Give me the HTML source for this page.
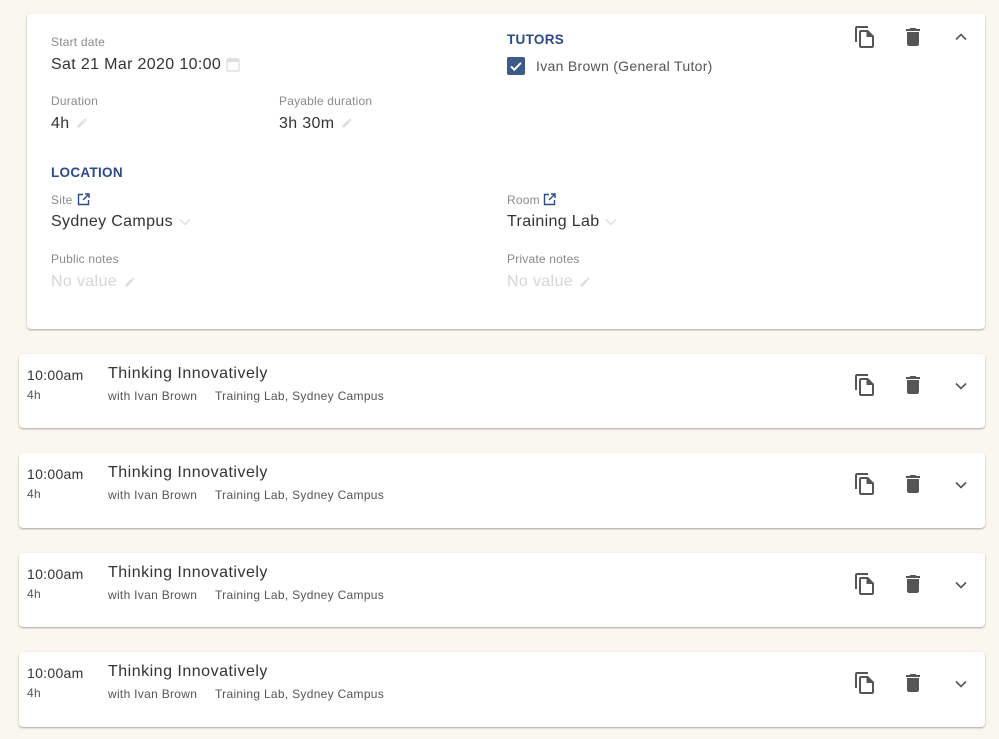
<!DOCTYPE html>
<html><head><meta charset="utf-8"><style>
*{margin:0;padding:0;box-sizing:border-box}
body{width:999px;height:739px;background:#faf7ef;font-family:"Liberation Sans",sans-serif;position:relative;overflow:hidden;color:#2a2a2a}
.card{position:absolute;background:#fff;border-radius:4px;box-shadow:0 1px 2px rgba(0,0,0,.25),0 1px 1px rgba(0,0,0,.1)}
.a{position:absolute;white-space:nowrap}
.lbl{font-size:12px;color:#8a8a8a;letter-spacing:.2px}
.val{font-size:16px;color:#333;letter-spacing:.35px}
.h{font-size:13.5px;font-weight:bold;color:#2c4a8a;letter-spacing:.3px}
.ph{font-size:16px;color:#d6d6d6;letter-spacing:.35px}
.sm{font-size:12px;color:#555;letter-spacing:.3px}
svg.i{position:absolute}
</style></head><body>

<div class="card" style="left:27px;top:14px;width:958px;height:315px"></div>
<div class="a lbl" style="left:51px;top:35px">Start date</div>
<div class="a val" style="left:51px;top:56px">Sat 21 Mar 2020 10:00</div>
<svg class="i" style="left:226px;top:57px" width="14" height="15" viewBox="0 0 14 15"><rect x="1" y="2" width="12" height="12" rx="1" fill="none" stroke="#ddd" stroke-width="1.3"/><rect x="1" y="2" width="12" height="3" fill="#ddd"/><rect x="3.5" y="0.5" width="1.5" height="3" fill="#ddd"/><rect x="9" y="0.5" width="1.5" height="3" fill="#ddd"/></svg>

<div class="a lbl" style="left:51px;top:94px">Duration</div>
<div class="a val" style="left:51px;top:115px">4h</div>
<svg class="i" style="left:76px;top:117px" width="12" height="12" viewBox="0 0 24 24"><path d="M3 17.25V21h3.75L17.81 9.94l-3.75-3.75L3 17.25zM20.71 7.04a1 1 0 000-1.41l-2.34-2.34a1 1 0 00-1.41 0l-1.83 1.83 3.75 3.75 1.83-1.83z" fill="#ddd"/></svg>
<div class="a lbl" style="left:279px;top:94px">Payable duration</div>
<div class="a val" style="left:279px;top:115px">3h 30m</div>
<svg class="i" style="left:341px;top:117px" width="12" height="12" viewBox="0 0 24 24"><path d="M3 17.25V21h3.75L17.81 9.94l-3.75-3.75L3 17.25zM20.71 7.04a1 1 0 000-1.41l-2.34-2.34a1 1 0 00-1.41 0l-1.83 1.83 3.75 3.75 1.83-1.83z" fill="#ddd"/></svg>

<div class="a h" style="left:507px;top:32px">TUTORS</div>
<div class="a" style="left:507px;top:57px;width:18px;height:18px;background:#3d5a8a;border-radius:2px"></div>
<svg class="i" style="left:507px;top:57px" width="18" height="18" viewBox="0 0 18 18"><path d="M4 9.5l3.3 3.2L14 5.8" fill="none" stroke="#fff" stroke-width="2"/></svg>
<div class="a" style="left:536px;top:58px;font-size:14px;color:#555;letter-spacing:.3px">Ivan Brown (General Tutor)</div>

<div class="a h" style="left:51px;top:165px">LOCATION</div>
<div class="a lbl" style="left:51px;top:193px">Site</div>
<svg class="i" style="left:77px;top:193px" width="13" height="13" viewBox="0 0 13 13"><path d="M6 1.5H1.5v10h10V7M8 1h4v4M12 1L6 7" fill="none" stroke="#2c4a8a" stroke-width="1.4"/></svg>
<div class="a val" style="left:51px;top:213px">Sydney Campus</div>
<svg class="i" style="left:179px;top:218px" width="12" height="8" viewBox="0 0 12 8"><path d="M1 1.5l5 5 5-5" fill="none" stroke="#ddd" stroke-width="1.3"/></svg>
<div class="a lbl" style="left:507px;top:193px">Room</div>
<svg class="i" style="left:543px;top:193px" width="13" height="13" viewBox="0 0 13 13"><path d="M6 1.5H1.5v10h10V7M8 1h4v4M12 1L6 7" fill="none" stroke="#2c4a8a" stroke-width="1.4"/></svg>
<div class="a val" style="left:507px;top:213px">Training Lab</div>
<svg class="i" style="left:605px;top:218px" width="12" height="8" viewBox="0 0 12 8"><path d="M1 1.5l5 5 5-5" fill="none" stroke="#ddd" stroke-width="1.3"/></svg>

<div class="a lbl" style="left:51px;top:252px">Public notes</div>
<div class="a ph" style="left:51px;top:273px">No value</div>
<svg class="i" style="left:124px;top:276px" width="12" height="12" viewBox="0 0 24 24"><path d="M3 17.25V21h3.75L17.81 9.94l-3.75-3.75L3 17.25zM20.71 7.04a1 1 0 000-1.41l-2.34-2.34a1 1 0 00-1.41 0l-1.83 1.83 3.75 3.75 1.83-1.83z" fill="#ddd"/></svg>
<div class="a lbl" style="left:507px;top:252px">Private notes</div>
<div class="a ph" style="left:507px;top:273px">No value</div>
<svg class="i" style="left:579px;top:276px" width="12" height="12" viewBox="0 0 24 24"><path d="M3 17.25V21h3.75L17.81 9.94l-3.75-3.75L3 17.25zM20.71 7.04a1 1 0 000-1.41l-2.34-2.34a1 1 0 00-1.41 0l-1.83 1.83 3.75 3.75 1.83-1.83z" fill="#ddd"/></svg>

<svg class="i" style="left:853px;top:25px" width="24" height="24" viewBox="0 0 24 24"><path d="M15 1H4c-1.1 0-2 .9-2 2v14h2V3h11V1zm-1 4H8c-1.1 0-1.99.9-1.99 2L6 21c0 1.1.89 2 1.99 2H19c1.1 0 2-.9 2-2V11l-6-6zM8 21V7h5.5v5h5.5v9H8z" fill="#555"/></svg>
<svg class="i" style="left:901px;top:25px" width="24" height="24" viewBox="0 0 24 24"><path d="M6 19c0 1.1.9 2 2 2h8c1.1 0 2-.9 2-2V7H6v12zM19 4h-3.5l-1-1h-5l-1 1H5v2h14V4z" fill="#555"/></svg>
<svg class="i" style="left:955px;top:33px" width="12" height="8" viewBox="0 0 12 8"><path d="M1 6.5l5-5 5 5" fill="none" stroke="#555" stroke-width="1.6"/></svg>

<div class="card" style="left:19px;top:354px;width:966px;height:74px"></div>
<div class="card" style="left:19px;top:453px;width:966px;height:75px"></div>
<div class="card" style="left:19px;top:553px;width:966px;height:74px"></div>
<div class="card" style="left:19px;top:652px;width:966px;height:75px"></div>

<div id="rows"></div>
<script>
var tops=[354,453,553,652],h='';
tops.forEach(function(t){
h+='<div class="a" style="left:27px;top:'+(t+13)+'px;font-size:14px;color:#333;letter-spacing:.3px">10:00am</div>'+
'<div class="a sm" style="left:27px;top:'+(t+34)+'px;font-size:12px">4h</div>'+
'<div class="a" style="left:108px;top:'+(t+11)+'px;font-size:16px;color:#333;letter-spacing:.5px">Thinking Innovatively</div>'+
'<div class="a sm" style="left:108px;top:'+(t+35)+'px">with Ivan Brown</div>'+
'<div class="a sm" style="left:215px;top:'+(t+35)+'px">Training Lab, Sydney Campus</div>'+
'<svg class="i" style="left:853px;top:'+(t+19)+'px" width="24" height="24" viewBox="0 0 24 24"><path d="M15 1H4c-1.1 0-2 .9-2 2v14h2V3h11V1zm-1 4H8c-1.1 0-1.99.9-1.99 2L6 21c0 1.1.89 2 1.99 2H19c1.1 0 2-.9 2-2V11l-6-6zM8 21V7h5.5v5h5.5v9H8z" fill="#555"/></svg>'+
'<svg class="i" style="left:901px;top:'+(t+19)+'px" width="24" height="24" viewBox="0 0 24 24"><path d="M6 19c0 1.1.9 2 2 2h8c1.1 0 2-.9 2-2V7H6v12zM19 4h-3.5l-1-1h-5l-1 1H5v2h14V4z" fill="#555"/></svg>'+
'<svg class="i" style="left:955px;top:'+(t+28)+'px" width="12" height="8" viewBox="0 0 12 8"><path d="M1 1.5l5 5 5-5" fill="none" stroke="#555" stroke-width="1.6"/></svg>';
});
document.getElementById('rows').outerHTML=h;
</script>
</body></html>
